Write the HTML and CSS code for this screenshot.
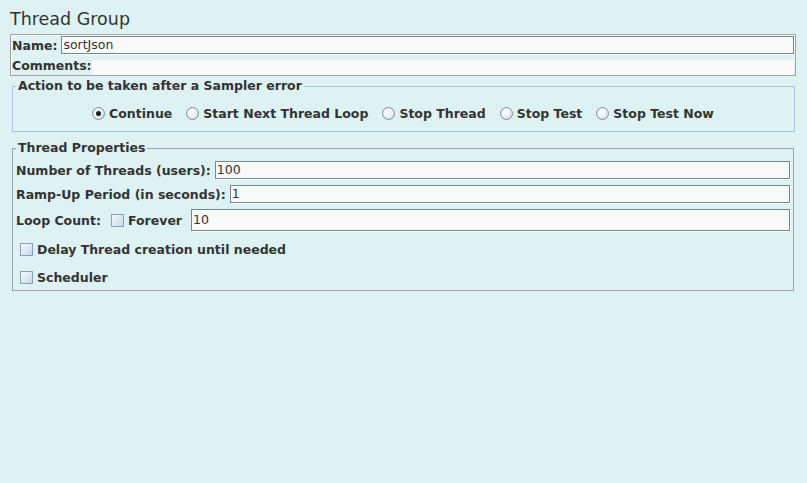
FILE: index.html
```html
<!DOCTYPE html>
<html>
<head>
<meta charset="utf-8">
<title>Thread Group</title>
<link rel="stylesheet" href="styles.css">
</head>
<body>
<div class="page">
  <div class="title">Thread Group</div>

  <div class="namebox">
    <div class="name-row">
      <span class="lbl">Name:</span>
      <div class="field name-field">sortJson</div>
    </div>
    <div class="comments-row">
      <span class="lbl comments-lbl">Comments:</span>
      <div class="comments-area"></div>
    </div>
  </div>

  <fieldset class="group action">
    <legend class="legend">Action to be taken after a Sampler error</legend>
    <div class="radio-row">
      <label class="opt"><span class="radio checked"></span><span class="lbl">Continue</span></label>
      <label class="opt"><span class="radio"></span><span class="lbl">Start Next Thread Loop</span></label>
      <label class="opt"><span class="radio"></span><span class="lbl">Stop Thread</span></label>
      <label class="opt"><span class="radio"></span><span class="lbl">Stop Test</span></label>
      <label class="opt"><span class="radio"></span><span class="lbl">Stop Test Now</span></label>
    </div>
  </fieldset>

  <fieldset class="group props">
    <legend class="legend">Thread Properties</legend>
    <div class="prop-row">
      <span class="lbl">Number of Threads (users):</span>
      <div class="field">100</div>
    </div>
    <div class="prop-row row2">
      <span class="lbl">Ramp-Up Period (in seconds):</span>
      <div class="field">1</div>
    </div>
    <div class="prop-row row3">
      <span class="lbl">Loop Count:</span>
      <span class="check loop-check"></span>
      <span class="lbl forever">Forever</span>
      <div class="field tall">10</div>
    </div>
    <div class="check-row row4">
      <span class="check"></span>
      <span class="lbl">Delay Thread creation until needed</span>
    </div>
    <div class="check-row row5">
      <span class="check"></span>
      <span class="lbl">Scheduler</span>
    </div>
  </fieldset>
</div>
</body>
</html>
```

FILE: styles.css
```css
html, body {
  margin: 0;
  padding: 0;
}

body {
  width: 807px;
  height: 483px;
  overflow: hidden;
  font-family: "DejaVu Sans", "Liberation Sans", sans-serif;
  color: #333333;
  background: #dff2f3;
}

.page {
  padding: 10px 11px 0 10px;
}

.title {
  font-size: 17.5px;
  line-height: 19px;
  height: 19px;
  white-space: nowrap;
}

.lbl {
  font-weight: bold;
  font-size: 12.5px;
  white-space: nowrap;
}

.field {
  box-sizing: border-box;
  flex: 1 1 auto;
  height: 17px;
  border: 1px solid #6d8b8b;
  box-shadow: inset 1px 1px 0 #ffffff, 1px 1px 0 #ffffff;
  background: #fafafa;
  font-size: 12.5px;
  line-height: 15px;
  padding: 0 1px;
  white-space: nowrap;
}

/* Name / Comments box */
.namebox {
  margin-top: 5px;
  height: 42px;
  box-sizing: border-box;
  border: 1px solid #a2a2a2;
  box-shadow: inset 1px 1px 0 #ffffff;
  padding: 1px 1px 0 1px;
}

.name-row {
  display: flex;
  align-items: center;
  height: 18px;
  gap: 4px;
}

.name-row .field {
  align-self: flex-start;
  height: 18px;
  line-height: 16px;
}

.comments-row {
  display: flex;
  align-items: flex-start;
  margin-top: 6px;
  height: 15px;
}

.comments-lbl {
  line-height: 11px;
}

.comments-area {
  flex: 1 1 auto;
  height: 15px;
  background: #fafafa;
}

/* Fieldsets */
.group {
  margin: 0;
  min-width: 0;
}

.legend {
  font-weight: bold;
  font-size: 12.5px;
  line-height: 14px;
  padding: 0 2px;
  white-space: nowrap;
}

.action {
  margin: 3px 1px 0 2px;
  border: 1px solid #a6c6e8;
  padding: 12px 4px 9px 3px;
}

.radio-row {
  display: flex;
  justify-content: center;
  align-items: center;
  gap: 14px;
  height: 17px;
}

.opt {
  display: flex;
  align-items: center;
  gap: 4px;
}

.radio {
  position: relative;
  box-sizing: border-box;
  width: 13px;
  height: 13px;
  border-radius: 50%;
  border: 1px solid #7d8d9c;
  background: radial-gradient(circle at 40% 35%, #ffffff 0, #eef3f8 40%, #c3d2e0 100%);
  flex: 0 0 auto;
}

.radio.checked::after {
  content: "";
  position: absolute;
  left: 3px;
  top: 3px;
  width: 5px;
  height: 5px;
  border-radius: 50%;
  background: #1e1e1e;
}

.props {
  margin: 9px 2px 0 2px;
  border: 1px solid #a2a2a2;
  padding: 6px 3px 4px 3px;
}

.prop-row {
  display: flex;
  align-items: center;
  height: 18px;
  gap: 4px;
}

.prop-row .field {
  height: 18px;
  line-height: 16px;
}

.prop-row .field.tall {
  height: 22px;
  line-height: 20px;
}

.row2 {
  margin-top: 6px;
}

.row3 {
  margin-top: 6px;
  height: 22px;
  gap: 0;
}

.loop-check {
  margin-left: 10px;
}

.forever {
  margin-left: 4px;
  margin-right: 9px;
}

.check {
  box-sizing: border-box;
  width: 13px;
  height: 13px;
  border: 1px solid #8aa0b6;
  background: linear-gradient(135deg, #f4f8fb 0%, #dde8f1 55%, #c4d6e5 100%);
  flex: 0 0 auto;
}

.check-row {
  display: flex;
  align-items: center;
  height: 18px;
  gap: 4px;
  padding-left: 4px;
}

.row4 {
  margin-top: 9px;
}

.row5 {
  margin-top: 10px;
}
```
